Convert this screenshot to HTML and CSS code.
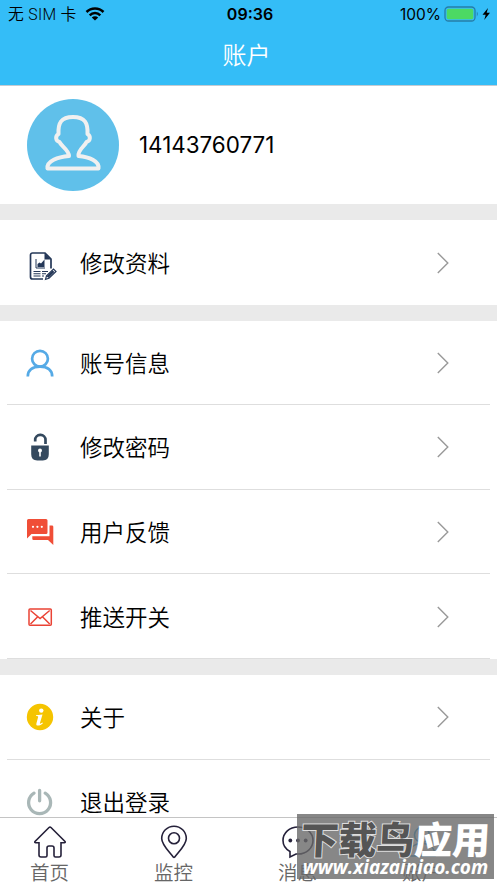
FILE: index.html
```html
<!DOCTYPE html>
<html lang="zh-CN">
<head>
  <meta charset="UTF-8">
  <meta name="viewport" content="width=device-width, initial-scale=1.0">
  <title>账户</title>
  <link rel="stylesheet" href="styles.css">
</head>
<body>
  <header class="header">
    <div class="status">
      <div class="status-left">
        <span>无 SIM 卡</span>
        <svg class="wifi" width="20" height="14" viewBox="0 0 20 14">
          <path d="M1.500 5a12 12 0 0 1 17 0M4.700 8.300a7.500 7.500 0 0 1 10.600 0" fill="none" stroke="#000" stroke-width="2.500"/>
          <path d="M10 13.500L6.800 10.500a4.600 4.600 0 0 1 6.400 0z"/>
        </svg>
      </div>
      <div class="status-time">09:36</div>
      <div class="status-right">
        <span>100%</span>
        <svg width="48" height="16" viewBox="0 0 48 16">
          <rect x="1" y="1" width="30" height="14" rx="3.5" fill="none" stroke="#267da8" stroke-width="1.3"/>
          <rect x="2.7" y="2.7" width="26.6" height="10.6" rx="1.7" fill="#4cd964"/>
          <path d="M32.8 5.6q2 2.4 0 4.8z" fill="#267da8"/>
          <path d="M44 2L38.5 8.8h3.2L40.2 14l5.8-7.3h-3.3z"/>
        </svg>
      </div>
    </div>
    <h1 class="title">账户</h1>
  </header>

  <main class="content">
    <section class="profile">
      <div class="avatar">
        <svg width="92" height="92" viewBox="0 0 92 92" fill="none" stroke="#f0f0f0" stroke-width="4" stroke-linejoin="round">
          <path d="M42 57C42 51 34 47 32.500 43C28.500 42 28 37 31.500 35C31 24 34 18 46 18S61 24 60.500 35C64 37 63.500 42 59.500 43C58 47 50.500 51 51.500 57C62 58 72.500 62 71.500 69.500H20.500C19.500 62 31 58 42 57z"/>
        </svg>
      </div>
      <span class="phone">14143760771</span>
    </section>

    <section class="group">
      <div class="row">
        <svg class="icon icon-low" viewBox="0 0 28 28">
          <path d="M17 27H6.500a2 2 0 0 1-2-2V3a2 2 0 0 1 2-2H19l6 6v9.500" fill="none" stroke="#253858" stroke-width="1.700"/>
          <path d="M18.500 1v6.500H25z" fill="#253858"/>
          <path d="M10 7v9h9" fill="none" stroke="#253858"/>
          <path d="M11.500 15v-3l2-1.500 1.500 1 3.500-4V15z" fill="#253858"/>
          <path d="M7.500 19.500h7M7.500 21.700h7M7.500 24h7M16 19.500h6M16 21.700h4M16 24h2" stroke="#253858" stroke-width="1.100"/>
          <path d="M19.500 27.300l1-3.500 7-6.800 2.500 2.500-7 6.800z" fill="#fff" stroke="#253858" stroke-width="1.200"/>
          <path d="M21.500 25.200l6-6" stroke="#253858" stroke-width="2.500"/>
        </svg>
        <span class="label">修改资料</span>
        <svg class="arrow" viewBox="0 0 12 22"><path d="M.8 1l10 10-10 10"/></svg>
      </div>
    </section>

    <section class="group">
      <div class="row">
        <svg class="icon" viewBox="0 0 28 28" fill="none" stroke="#55aae6" stroke-width="2.700">
          <circle cx="14" cy="9.700" r="7.900"/>
          <path d="M1.800 27.500C1.800 21 6.500 17.600 14 17.600S26.200 21 26.200 27.500"/>
        </svg>
        <span class="label">账号信息</span>
        <svg class="arrow" viewBox="0 0 12 22"><path d="M.8 1l10 10-10 10"/></svg>
      </div>
      <div class="row">
        <svg class="icon" viewBox="0 0 28 28">
          <path d="M9.200 8.500V6.800a4.900 4.900 0 0 1 4.900-4.900h.5a4.900 4.900 0 0 1 4.900 4.900V11" fill="none" stroke="#34495e" stroke-width="2.700"/>
          <path d="M5.200 12.500h17.600V21q0 6.500-6 6.500h-5.600q-6 0-6-6.500z" fill="#34495e"/>
          <circle cx="14" cy="17.500" r="2" fill="#fff"/>
          <path d="M14 18v5.500" stroke="#fff" stroke-width="1.600"/>
        </svg>
        <span class="label">修改密码</span>
        <svg class="arrow" viewBox="0 0 12 22"><path d="M.8 1l10 10-10 10"/></svg>
      </div>
      <div class="row">
        <svg class="icon" viewBox="0 0 28 28">
          <path d="M2.500 1h17.500a1.500 1.500 0 0 1 1.500 1.500v12a1.500 1.500 0 0 1-1.500 1.500H5.500L1 20.500v-18A1.500 1.500 0 0 1 2.500 1zM23.500 7.500H26a1.300 1.300 0 0 1 1.300 1.300V27L22 22H7.500a1.200 1.200 0 0 1-1.200-1.200V18.300h17.200z" fill="#f04e37"/>
          <g fill="#fff"><circle cx="7" cy="8.800" r="1.100"/><circle cx="11.400" cy="8.800" r="1.100"/><circle cx="15.800" cy="8.800" r="1.100"/></g>
        </svg>
        <span class="label">用户反馈</span>
        <svg class="arrow" viewBox="0 0 12 22"><path d="M.8 1l10 10-10 10"/></svg>
      </div>
      <div class="row">
        <svg class="icon" viewBox="0 0 28 28" fill="none" stroke="#ea4335" stroke-width="1.500">
          <rect x="3" y="6" width="22.300" height="16.300" rx="1"/>
          <path d="M4.500 7.500l9.600 8 9.600-8M4.500 21l7-7M23.700 21l-7-7"/>
        </svg>
        <span class="label">推送开关</span>
        <svg class="arrow" viewBox="0 0 12 22"><path d="M.8 1l10 10-10 10"/></svg>
      </div>
    </section>

    <section class="group">
      <div class="row">
        <svg class="icon" viewBox="0 0 28 28">
          <circle cx="14" cy="14" r="13.200" fill="#f5c400"/>
          <circle cx="15.300" cy="7.600" r="2.200" fill="#fff"/>
          <path d="M10 12.200l6.500-.7-2.600 8.700q-.2 1.200 2.600-.7l.4.700c-2.500 2.700-7.400 3.600-6.500.2l1.800-6.600q.2-.9-2.200-.8z" fill="#fff"/>
        </svg>
        <span class="label">关于</span>
        <svg class="arrow" viewBox="0 0 12 22"><path d="M.8 1l10 10-10 10"/></svg>
      </div>
      <div class="row">
        <svg class="icon" viewBox="0 0 28 28" fill="none" stroke="#a9b7b7" stroke-width="3.300" stroke-linecap="round">
          <path d="M8 5.200a11 11 0 1 0 11.200 0M13.600 2.300v10.500"/>
        </svg>
        <span class="label">退出登录</span>
      </div>
    </section>
  </main>

  <nav class="tabs">
    <div class="tab">
      <svg width="34" height="34" viewBox="0 0 34 34">
        <path d="M16 2.500q1-.9 2 0L32 16.500q.8 1.200-.8 1.300H28V30q0 2-2 2h-3.500q-1.500 0-1.500-1.500V23q0-2-2-2h-3q-2 0-2 2v7.500q0 1.500-1.500 1.500H8q-2 0-2-2V17.800H2.800Q1.200 17.700 2 16.500z"/>
      </svg>
      <span>首页</span>
    </div>
    <div class="tab">
      <svg width="34" height="34" viewBox="0 0 34 34">
        <path d="M16.200 32C13 27.500 4.700 20 4.700 13.500a12.300 12.300 0 0 1 24.600 0C29.300 20 21 27.500 17.800 32q-.8.700-1.600 0z"/>
        <circle cx="17" cy="13.300" r="5.500"/>
      </svg>
      <span>监控</span>
    </div>
    <div class="tab">
      <svg width="34" height="34" viewBox="0 0 34 34">
        <path d="M9 32v-5.500C4.500 24 2 20 2 15.500 2 8 8.500 2 17 2s15 6 15 13.500S25.500 29 17 29h-2z"/>
        <g class="dots"><circle cx="9.300" cy="15.500" r="1.900"/><circle cx="17" cy="15.500" r="1.900"/><circle cx="24.700" cy="15.500" r="1.900"/></g>
      </svg>
      <span>消息</span>
    </div>
    <div class="tab active">
      <svg width="34" height="34" viewBox="0 0 34 34">
        <circle cx="17" cy="10" r="7.500"/>
        <path d="M4 31c0-8 5-12.500 13-12.500S30 23 30 31z"/>
      </svg>
      <span>账户</span>
    </div>
  </nav>

  <div class="watermark">
    <div class="mark-name"><span>下载鸟</span>应用</div>
    <div class="mark-url">www.xiazainiao.com</div>
  </div>
</body>
</html>
```
FILE: styles.css
```css
* {
  box-sizing: border-box;
}

body {
  display: flex;
  flex-direction: column;
  height: 100vh;
  margin: 0;
  overflow: hidden;
  position: relative;
  background-color: #fff;
  color: #000;
  font-family: Inter, "Noto Sans CJK SC", sans-serif;
}

.header {
  flex: none;
  height: 86px;
  background-color: #34bdf7;
  border-bottom: 1px solid #c4cbd2;
}

.status {
  display: grid;
  grid-template-columns: 1fr auto 1fr;
  align-items: center;
  height: 28px;
  padding: 0 5px 0 8px;
  font-size: 15.5px;
}

.status-left, .status-right {
  display: flex;
  align-items: center;
  gap: 8px;
}

.status-left {
  font-family: Roboto, "Noto Sans CJK SC", sans-serif;
  font-size: 15.8px;
  font-weight: 350;
  line-height: 20px;
  letter-spacing: 0.3px;
}

.status-left span {
  margin-top: 2px;
}

.status-right {
  justify-content: flex-end;
  gap: 3px;
}

.status-time {
  font-weight: 600;
  font-size: 16px;
}

.title {
  margin: 9px 0 0;
  padding-right: 4px;
  color: #fff;
  font-size: 24px;
  font-weight: 350;
  line-height: 38px;
  text-align: center;
}

.content {
  flex: 1;
  min-height: 0;
  overflow: hidden;
  background-color: #eaeaea;
}

.profile {
  display: flex;
  align-items: center;
  gap: 20px;
  height: 118px;
  padding-left: 27px;
  background-color: #fff;
}

.avatar {
  width: 92px;
  height: 92px;
  border-radius: 50%;
  background-color: #60c0ea;
}

.phone {
  margin-top: -2px;
  font-size: 22.4px;
}

.group {
  margin-top: 16px;
  padding: 0 7px;
  background-color: #fff;
}

.row {
  display: flex;
  align-items: center;
  height: 84.6px;
  padding: 0 41px 0 19px;
  border-bottom: 1px solid #dedede;
}

.row:only-child {
  border-bottom: none;
}

.icon {
  width: 28px;
  height: 28px;
  margin-top: 1px;
  margin-right: 26px;
  overflow: visible;
}

.icon-low {
  margin-top: 7px;
}

.label {
  margin-top: -1px;
  font-size: 22.5px;
  font-weight: 350;
}

.arrow {
  width: 12px;
  height: 22px;
  margin-top: 1px;
  margin-left: auto;
  fill: none;
  stroke: #999;
  stroke-width: 1.4;
}

.tabs {
  display: grid;
  grid-template-columns: repeat(4, 124px);
  flex: none;
  height: 66px;
  margin-left: -12.5px;
  border-top: 1px solid #c4c4c4;
  background-color: #fff;
}

.tab {
  display: flex;
  flex-direction: column;
  align-items: center;
  padding-top: 7px;
  color: #666;
  font-size: 19.5px;
  font-weight: 350;
  line-height: 22px;
}

.tab span {
  margin-top: 3px;
}

.tab svg {
  flex: none;
  fill: none;
  stroke: #25213a;
  stroke-width: 1.6;
}

.tab .dots {
  fill: #25213a;
  stroke: none;
}

.tab.active svg {
  stroke: #34a5df;
}

.watermark {
  position: absolute;
  right: 3px;
  bottom: 4px;
  width: 197px;
  height: 65px;
  overflow: hidden;
  background-color: rgba(105, 105, 105, 0.8);
  color: #fff;
  text-align: center;
  white-space: nowrap;
}

.mark-name {
  margin-top: 6px;
  font-size: 37.8px;
  font-weight: 900;
  line-height: 40px;
  transform: skewX(-3deg);
}

.mark-name span {
  color: #555;
  -webkit-text-stroke: 2px #ddd;
  paint-order: stroke fill;
}

.mark-url {
  font-family: "Open Sans", sans-serif;
  font-size: 19px;
  font-style: italic;
  font-weight: 700;
  line-height: 15px;
}
```
